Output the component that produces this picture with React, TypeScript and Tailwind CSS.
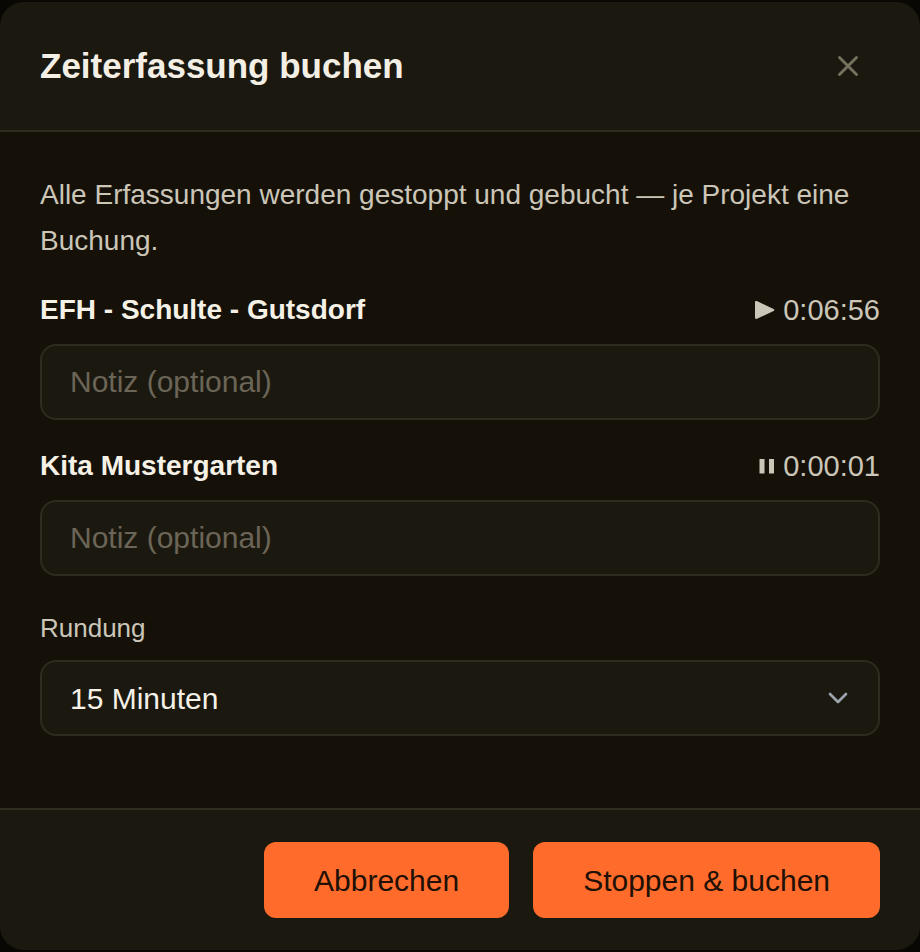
import React, { useState } from 'react'
import { ChevronDown, X } from 'lucide-react'

type TStatus = 'running' | 'paused'

type TEntry = {
    id: string
    project: string
    time: string
    status: TStatus
}

const entries: TEntry[] = [
    { id: 'efh-schulte', project: 'EFH - Schulte - Gutsdorf', time: '0:06:56', status: 'running' },
    { id: 'kita', project: 'Kita Mustergarten', time: '0:00:01', status: 'paused' },
]

const roundings = ['Keine', '5 Minuten', '15 Minuten', '30 Minuten']

const StatusIcon = ({ status }: { status: TStatus }) => {
    if (status === 'running') {
        return (
            <svg className="h-5 w-5" viewBox="0 0 20 20" fill="currentColor" aria-hidden="true">
                <path d="M0 2.2C0 1.1 0.9 0.6 1.9 1.1L18.6 8.9C19.6 9.4 19.6 10.6 18.6 11.1L1.9 18.7C0.9 19.2 0 18.7 0 17.6Z" />
            </svg>
        )
    }

    return (
        <svg className="h-5 w-4" viewBox="0 0 16 20" fill="currentColor" aria-hidden="true">
            <path d="M0.5 3H5.5V17.5H0.5ZM10 3H15V17.5H10Z" />
        </svg>
    )
}

const EntryField = ({ entry }: { entry: TEntry }) => {
    const { id, project, time, status } = entry

    return (
        <div className="flex flex-col gap-3">
            <div className="flex items-center justify-between leading-[44px]">
                <label htmlFor={id} className="text-[28px] font-bold text-[#f5f1e6]">{project}</label>
                <span className="flex items-center gap-2 text-[29px] text-[#cbc6b8]">
                    <StatusIcon status={status} />
                    {time}
                </span>
            </div>
            <input
                id={id}
                type="text"
                placeholder="Notiz (optional)"
                className="h-[76px] w-full rounded-2xl border-2 border-[#2e2b20] bg-[#1b1810] px-7 text-[30px] text-[#f5f1e6] outline-none placeholder:text-[#6b6557]"
            />
        </div>
    )
}

const App = () => {
    const [rounding, setRounding] = useState('15 Minuten')

    return (
        <main className="min-h-screen bg-[#080704] py-0.5 font-['Liberation_Sans',Arial,sans-serif]">
            <section role="dialog" aria-labelledby="dialog-title" className="overflow-hidden rounded-3xl bg-[#151109]">
                <header className="flex items-center justify-between border-b-2 border-[#2f2c20] bg-[#1b1810] px-10 py-8">
                    <h1 id="dialog-title" className="text-[35px] leading-[44px] font-bold text-[#f3efe5]">Zeiterfassung buchen</h1>
                    <button type="button" aria-label="Schließen" className="flex h-16 w-16 items-center justify-center text-[#77715f]">
                        <X size={34} strokeWidth={2} />
                    </button>
                </header>

                <div className="flex flex-col gap-6 px-10 pt-10 pb-18">
                    <p className="text-[28px] leading-[46px] text-[#cbc6b8]">
                        Alle Erfassungen werden gestoppt und gebucht — je Projekt eine Buchung.
                    </p>

                    {entries.map((entry) => <EntryField key={entry.id} entry={entry} />)}

                    <div className="flex flex-col gap-3 pt-2">
                        <label htmlFor="rounding" className="text-[26px] leading-10 text-[#cbc6b8]">Rundung</label>
                        <div className="relative">
                            <select
                                id="rounding"
                                value={rounding}
                                onChange={(e) => setRounding(e.target.value)}
                                className="h-[76px] w-full appearance-none rounded-2xl border-2 border-[#2e2b20] bg-[#1b1810] px-7 text-[30px] text-[#f5f1e6] outline-none"
                            >
                                {roundings.map((r) => <option key={r}>{r}</option>)}
                            </select>
                            <ChevronDown size={32} className="pointer-events-none absolute inset-y-0 right-[26px] my-auto text-[#9ca3af]" />
                        </div>
                    </div>
                </div>

                <footer className="flex justify-end gap-6 border-t-2 border-[#2f2c20] bg-[#1b1810] px-10 py-8">
                    <button type="button" className="h-[76px] rounded-xl bg-[#ff6b2b] px-[50px] text-[30px] text-[#211006]">Abbrechen</button>
                    <button type="button" className="h-[76px] rounded-xl bg-[#ff6b2b] px-[50px] text-[30px] text-[#211006]">Stoppen &amp; buchen</button>
                </footer>
            </section>
        </main>
    )
}

export default App
